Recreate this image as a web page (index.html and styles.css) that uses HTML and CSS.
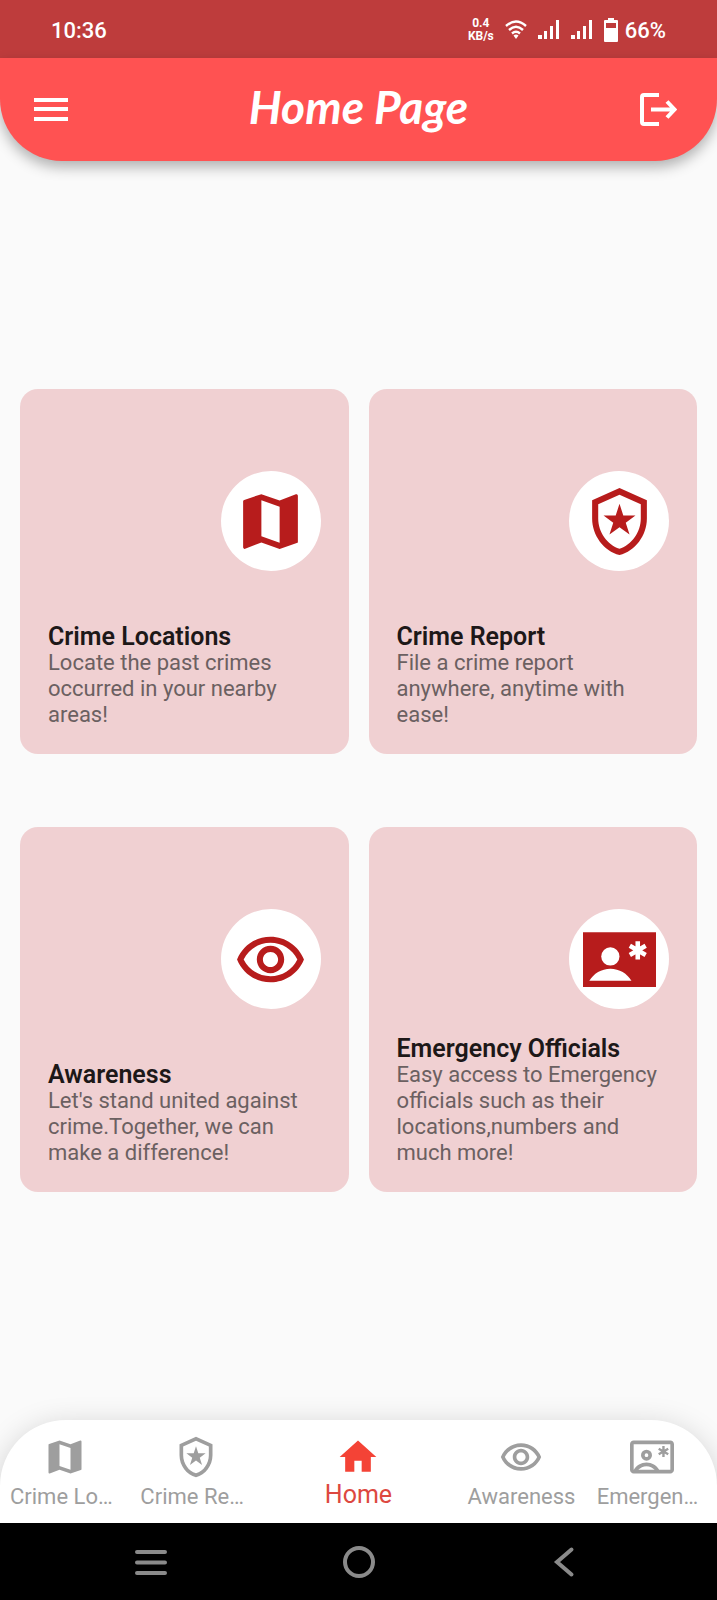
FILE: index.html
```html
<!DOCTYPE html>
<html lang="en">
<head>
<meta charset="utf-8">
<meta name="viewport" content="width=device-width, initial-scale=1">
<title>Home Page</title>
<link rel="stylesheet" href="styles.css">
</head>
<body>
<svg class="defs" aria-hidden="true">
  <symbol id="map" viewBox="0 0 24 24"><path d="M20.500 3l-.16.030L15 5.100 9 3 3.360 4.900c-.21.070-.36.250-.36.480V20.500c0 .28.220.5.500.5l.16-.03L9 18.900l6 2.100 5.640-1.900c.21-.07.360-.25.360-.48V3.500c0-.28-.22-.5-.5-.5zM15 19l-6-2.110V5l6 2.110V19z"/></symbol>
  <symbol id="police" viewBox="0 0 24 24"><path d="M12 1L3 5v6c0 5.550 3.840 10.740 9 12 5.160-1.260 9-6.450 9-12V5l-9-4zm7 10c0 4.520-2.980 8.690-7 9.930-4.020-1.240-7-5.410-7-9.930V6.300l7-3.110 7 3.110V11z"/><path d="M12 6.200l1.250 3.800h4l-3.200 2.400 1.250 3.900-3.300-2.400-3.300 2.400 1.250-3.900L6.750 10h4z"/></symbol>
  <symbol id="eye" viewBox="0 -0.5 24 24"><path d="M12 6c3.790 0 7.170 2.130 8.820 5.500C19.170 14.870 15.790 17 12 17s-7.170-2.130-8.820-5.500C4.830 8.130 8.210 6 12 6m0-2C7 4 2.730 7.110 1 11.500 2.730 15.890 7 19 12 19s9.270-3.110 11-7.500C21.270 7.110 17 4 12 4zm0 5c1.380 0 2.500 1.120 2.500 2.500S13.380 14 12 14s-2.500-1.120-2.500-2.500S10.620 9 12 9m0-2c-2.480 0-4.500 2.020-4.500 4.500S9.520 16 12 16s4.500-2.020 4.500-4.500S14.480 7 12 7z"/></symbol>
  <symbol id="contact" viewBox="0 0 24 24"><path d="M0 3h24v18H0z"/><g fill="#fff"><circle cx="9" cy="11" r="3"/><path d="M2.080 19c1.380-2.390 3.960-4 6.920-4s5.540 1.610 6.920 4z"/></g><path d="M18 6v6M15.400 7.500l5.200 3M15.400 10.500l5.200-3" stroke="#fff" stroke-width="1.500"/></symbol>
  <symbol id="contact-outline" viewBox="0 0 24 24"><path fill-rule="evenodd" d="M22 3H2C.9 3 0 3.900 0 5v14c0 1.100.9 2 2 2h20c1.100 0 2-.9 2-2V5c0-1.100-.9-2-2-2zM4.540 19c1.100-1.220 2.690-2 4.460-2s3.360.78 4.460 2zM22 19h-6.080c-1.380-2.390-3.960-4-6.920-4s-5.540 1.610-6.920 4H2V5h20z"/><circle cx="9" cy="11" r="2" fill="none" stroke="currentColor" stroke-width="2"/><path d="M18.250 6v6M15.650 7.500l5.200 3M15.650 10.500l5.200-3" stroke="currentColor" stroke-width="1.300"/></symbol>
  <symbol id="home" viewBox="0 0 24 24"><path d="M10 20v-6h4v6h5v-8h3L12 3 2 12h3v8z"/></symbol>
  <symbol id="signal" viewBox="0 0 22 20"><path d="M0 15h4v4H0zM6 11h3v8H6zM12 6h3v13h-3zM18 0h3v19h-3z"/></symbol>
</svg>

<div class="status">
  <time>10:36</time>
  <div class="status-info">
    <span class="speed">0.4<br>KB/s</span>
    <svg class="wifi" viewBox="0 0 22 20"><g fill="none" stroke="currentColor" stroke-width="2.400"><path d="M1 6Q11-3 21 6M4 10Q11 3.500 18 10M7 13.500Q11 10 15 13.500"/></g><path d="M8.500 15.500Q11 13.500 13.500 15.500L11 19z"/></svg>
    <svg class="signal"><use href="#signal"/></svg>
    <svg class="signal"><use href="#signal"/></svg>
    <svg class="battery" viewBox="0 0 14 24"><path fill-rule="evenodd" d="M4 0h6v2h3q1 0 1 1v20q0 1-1 1H1q-1 0-1-1V3q0-1 1-1h3zM2 5v5h10V5z"/></svg>
    <span class="percent">66%</span>
  </div>
</div>

<header class="appbar">
  <button class="icon-button" type="button" aria-label="Open menu"><svg class="menu-icon" viewBox="0 0 34 24"><path d="M0 0h34v4H0zM0 9h34v4H0zM0 19h34v4H0z"/></svg></button>
  <h1>Home Page</h1>
  <button class="icon-button" type="button" aria-label="Log out"><svg class="logout-icon" viewBox="0 0 37 33"><path d="M19 2H4Q2 2 2 4v25q0 2 2 2h15M11 16.500h23M27 8.500l7.500 8-7.500 8" fill="none" stroke="currentColor" stroke-width="4"/></svg></button>
</header>

<main class="cards">
  <a class="card" href="#locations">
    <span class="badge"><svg><use href="#map"/></svg></span>
    <span class="card-text"><strong>Crime Locations</strong><span>Locate the past crimes occurred in your nearby areas!</span></span>
  </a>
  <a class="card" href="#report">
    <span class="badge"><svg><use href="#police"/></svg></span>
    <span class="card-text"><strong>Crime Report</strong><span>File a crime report anywhere, anytime with ease!</span></span>
  </a>
  <a class="card" href="#awareness">
    <span class="badge"><svg><use href="#eye"/></svg></span>
    <span class="card-text"><strong>Awareness</strong><span>Let's stand united against crime.Together, we can make a difference!</span></span>
  </a>
  <a class="card" href="#officials">
    <span class="badge"><svg><use href="#contact"/></svg></span>
    <span class="card-text"><strong>Emergency Officials</strong><span>Easy access to Emergency officials such as their locations,numbers and much more!</span></span>
  </a>
</main>

<nav class="tabs" aria-label="Main">
  <a class="tab" href="#locations"><svg><use href="#map"/></svg><span>Crime Locations</span></a>
  <a class="tab" href="#report"><svg><use href="#police"/></svg><span>Crime Report</span></a>
  <a class="tab active" href="#home" aria-current="page"><svg><use href="#home"/></svg><span>Home</span></a>
  <a class="tab" href="#awareness"><svg><use href="#eye"/></svg><span>Awareness</span></a>
  <a class="tab" href="#officials"><svg><use href="#contact-outline"/></svg><span>Emergency Officials</span></a>
</nav>

<div class="system">
  <button type="button" aria-label="Recent apps"><svg viewBox="0 0 32 32"><path d="M2 6h28M2 16.500h28M2 27h28"/></svg></button>
  <button type="button" aria-label="Home screen"><svg viewBox="0 0 32 32"><circle cx="16" cy="16" r="14"/></svg></button>
  <button type="button" aria-label="Back"><svg viewBox="0 0 32 32"><path d="M21.500 3.500L7 16l14.500 12.500"/></svg></button>
</div>
</body>
</html>
```
FILE: styles.css
```css
* {
  box-sizing: border-box;
}

body {
  display: flex;
  flex-direction: column;
  min-height: 100vh;
  margin: 0;
  background: #fafafa;
  font-family: Roboto, "Liberation Sans", sans-serif;
}

a {
  color: inherit;
  text-decoration: none;
}

button {
  padding: 0;
  border: 0;
  background: none;
  color: inherit;
}

svg {
  display: block;
  fill: currentColor;
}

.defs {
  position: absolute;
  width: 0;
  height: 0;
}

.status {
  display: flex;
  align-items: center;
  justify-content: space-between;
  height: 58px;
  padding: 2px 51px 0;
  background: #be3c3c;
  color: #fff;
  font-size: 22px;
  font-weight: 500;
}

.status-info {
  display: flex;
  align-items: center;
  gap: 11px;
}

.speed {
  font-size: 12px;
  font-weight: 700;
  line-height: 13px;
  text-align: center;
}

.wifi,
.signal {
  width: 22px;
  height: 20px;
}

.battery {
  width: 14px;
  height: 24px;
}

.percent {
  margin-left: -4px;
}

.appbar {
  display: grid;
  grid-template-columns: 1fr auto 1fr;
  align-items: center;
  height: 103px;
  padding: 0 40px 0 34px;
  border-radius: 0 0 62px 62px;
  background: #ff5252;
  box-shadow: 0 6px 14px rgba(0, 0, 0, 0.3);
  color: #fff;
}

.appbar h1 {
  margin: 0;
  padding: 0 0 6px 6px;
  font-family: Satisfy, Lato, sans-serif;
  font-size: 46px;
  font-style: italic;
  font-weight: 700;
  line-height: 56px;
}

.icon-button {
  justify-self: start;
}

.icon-button:last-child {
  justify-self: end;
}

.menu-icon {
  width: 34px;
  height: 24px;
}

.logout-icon {
  width: 37px;
  height: 33px;
}

.cards {
  display: grid;
  flex: 1;
  grid-template-columns: 1fr 1fr;
  align-content: center;
  gap: 73px 20px;
  padding: 20px;
}

.card {
  display: flex;
  flex-direction: column;
  justify-content: space-between;
  min-height: 365px;
  padding: 82px 28px 26px;
  border-radius: 18px;
  background: #f0d0d2;
}

.badge {
  display: grid;
  place-items: center;
  align-self: flex-end;
  width: 100px;
  height: 100px;
  border-radius: 50%;
  background: #fff;
  color: #b71c1c;
}

.badge svg {
  width: 73px;
  height: 73px;
}

.card-text {
  display: flex;
  flex-direction: column;
  color: #6b6061;
  font-size: 22px;
  line-height: 26px;
}

.card-text strong {
  color: #1d1818;
  font-size: 25px;
  font-weight: 600;
  line-height: 27px;
}

.tabs {
  display: grid;
  grid-template-columns: 2fr 2fr 3fr 2fr 2fr;
  height: 103px;
  border-radius: 66px 66px 0 0;
  background: #fff;
  box-shadow: 0 6px 30px rgba(0, 0, 0, 0.18);
  color: #9e9e9e;
}

.tab {
  display: flex;
  flex-direction: column;
  align-items: center;
  min-width: 0;
  padding: 15px 10px 0;
  font-size: 22px;
  line-height: 36px;
}

.tab svg {
  flex: none;
  width: 44px;
  height: 44px;
}

.tab span {
  max-width: 100%;
  overflow: hidden;
  text-overflow: ellipsis;
  white-space: nowrap;
}

.tab.active {
  color: #f44336;
  font-size: 25px;
  line-height: 32px;
}

.tab.active span {
  color: #dd4840;
}

.system {
  display: flex;
  align-items: center;
  justify-content: space-between;
  height: 77px;
  padding: 0 135px;
  background: #000;
  color: #8a8a8a;
}

.system svg {
  width: 32px;
  height: 32px;
  fill: none;
  stroke: currentColor;
  stroke-linecap: round;
  stroke-width: 4;
}
```
